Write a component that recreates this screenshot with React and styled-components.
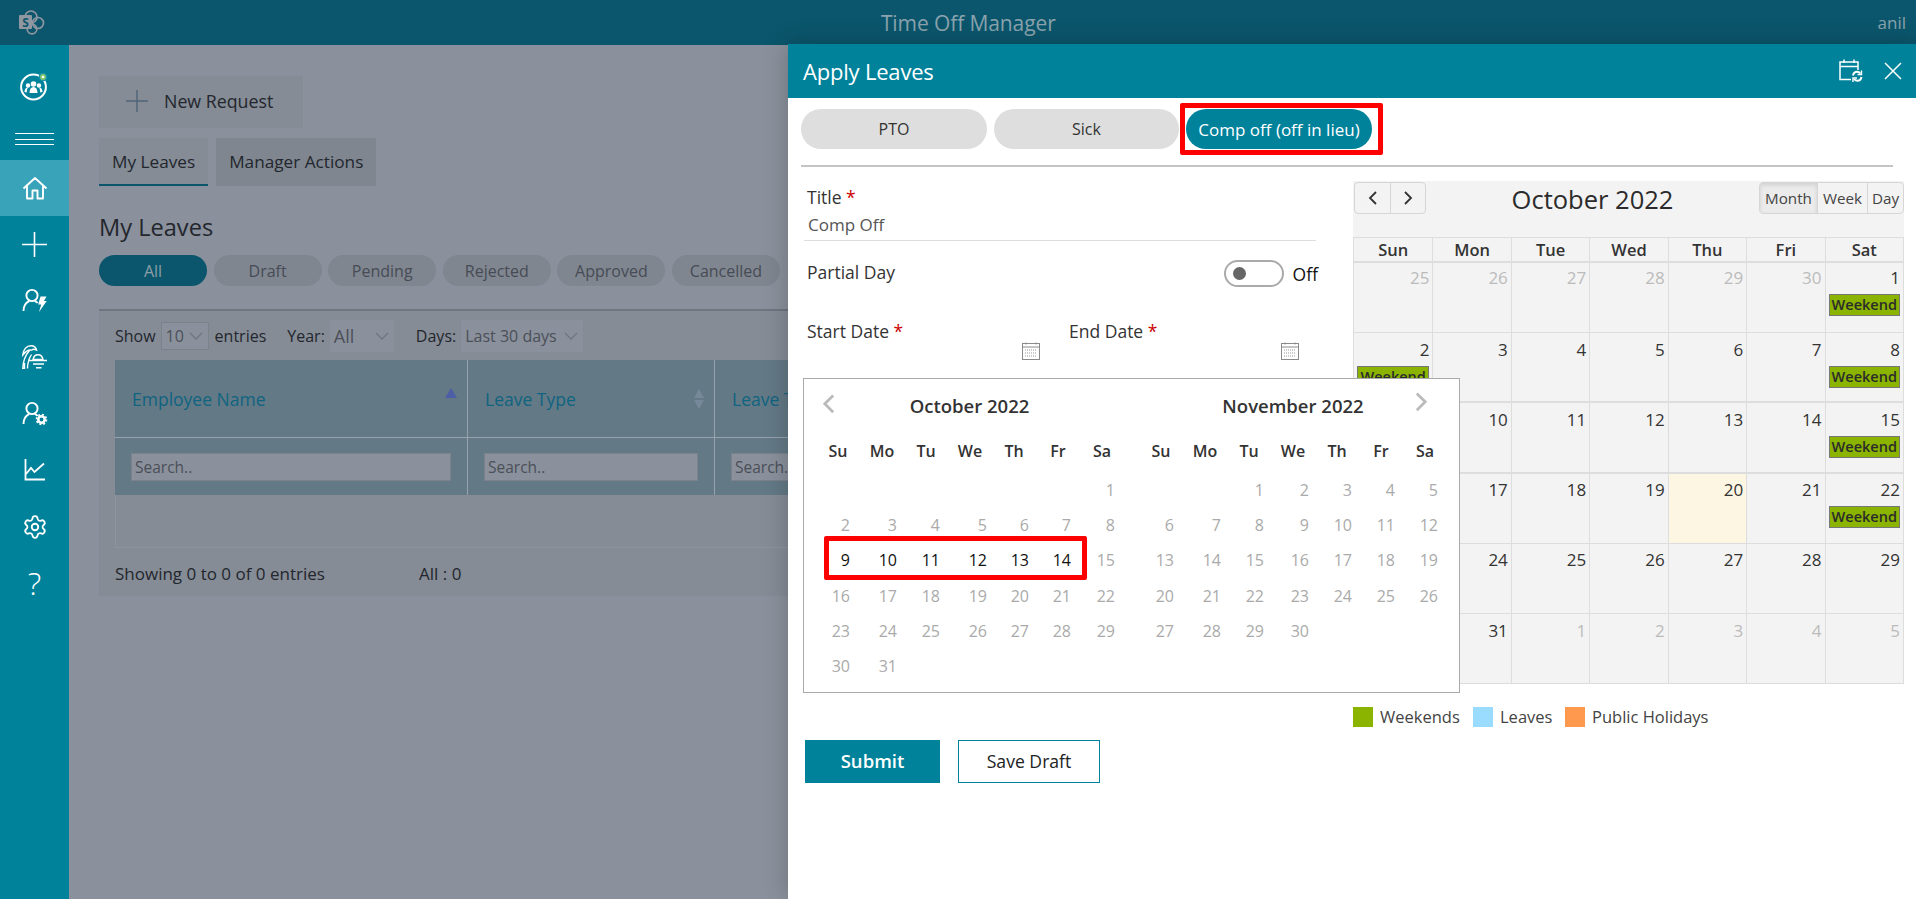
import React from 'react'
import styled, { createGlobalStyle } from 'styled-components'
import { Settings } from 'lucide-react'

const GlobalStyle = createGlobalStyle`
    html, body { margin: 0; padding: 0; }
    body { font-family: "Open Sans", "Noto Sans", sans-serif; color: #333; }
    * { box-sizing: border-box; }
`

const TEAL = '#00829b'

const Page = styled.div`
    width: 1916px;
    height: 899px;
    overflow: hidden;
    display: flex;
    flex-direction: column;
`
const TopBar = styled.header`
    height: 45px;
    flex: none;
    background: #0b566c;
    position: relative;
    display: flex;
    align-items: center;
    justify-content: space-between;
    padding: 0 10px 0 19px;
`
const AppTitle = styled.div`
    font-size: 21px;
    color: #8aa3ae;
    margin-left: 14px;
    letter-spacing: -0.1px;
`
const UserName = styled.div`
    font-size: 17px;
    color: #8aa3ae;
`
const Body = styled.div`
    flex: 1;
    display: flex;
    min-height: 0;
`
const Sidebar = styled.nav`
    width: 69px;
    flex: none;
    background: ${TEAL};
    color: #fff;
    display: flex;
    flex-direction: column;
    padding-top: 27px;
`
const SideLogo = styled.div`
    height: 27px;
    display: flex;
    justify-content: center;
`
const Burger = styled.div`
    height: 12px;
    margin: 34px 15px 15px;
    display: flex;
    flex-direction: column;
    justify-content: space-between;
    span { display: block; height: 1px; background: #fff; }
`
const SideItem = styled.div`
    height: ${p => (p.$active ? '56px' : '56.5px')};
    display: flex;
    align-items: center;
    justify-content: center;
    background: ${p => (p.$active ? '#39a3ba' : 'transparent')};
`
const Question = styled.span`
    font-size: 32px;
    font-weight: 300;
    line-height: 1;
`
const Main = styled.main`
    width: 719px;
    flex: none;
    background: #8a919c;
    padding: 31px 0 0 30px;
    overflow: hidden;
`
const NewRequest = styled.div`
    width: 204px;
    height: 52px;
    background: #858c96;
    display: flex;
    align-items: center;
    padding: 0 0 2px 27px;
    gap: 16px;
    font-size: 17.8px;
    color: #23262d;
`
const Tabs = styled.div`
    display: flex;
    gap: 8px;
    margin-top: 10px;
`
const Tab = styled.div`
    height: 48px;
    padding: 0 13px;
    display: flex;
    align-items: center;
    background: ${p => (p.$active ? '#858c96' : '#7f8690')};
    border-bottom: 2px solid ${p => (p.$active ? '#0b566c' : 'transparent')};
    font-size: 17.2px;
    font-weight: 500;
    color: #23262d;
`
const Heading = styled.h2`
    margin: 24px 0 0;
    font-size: 23.6px;
    line-height: 35px;
    font-weight: 500;
    color: #23262d;
`
const Pills = styled.div`
    display: flex;
    gap: 6.6px;
    margin-top: 10px;
`
const Pill = styled.div`
    width: 108px;
    height: 31px;
    border-radius: 16px;
    display: flex;
    align-items: center;
    justify-content: center;
    font-size: 16px;
    background: ${p => (p.$active ? '#0b566c' : '#7f8690')};
    color: ${p => (p.$active ? '#8b9ea8' : '#474b55')};
`
const Card = styled.section`
    margin-top: 23px;
    height: 287px;
    background: #858c96;
    border-top: 2px solid #6f7680;
    padding: 9px 0 0 16px;
    overflow: hidden;
`
const FilterRow = styled.div`
    height: 32px;
    display: flex;
    align-items: center;
    font-size: 16px;
    color: #23262d;
`
const FilterLabel = styled.span`
    margin: ${p => p.$margin || '0'};
`
const FakeSelect = styled.div`
    width: ${p => p.$width}px;
    height: ${p => p.$height || 32}px;
    margin-left: 5px;
    background: #8a919c;
    border: ${p => (p.$outlined ? '1px solid #7b828c' : 'none')};
    display: flex;
    align-items: center;
    justify-content: space-between;
    padding: 0 5px 0 4px;
    font-size: ${p => p.$size || 16}px;
    color: #4b4f58;
`
const DataTable = styled.div`
    margin-top: 8px;
    display: grid;
    grid-template-columns: 353px 247px 300px;
    grid-template-rows: 78px 57px 53px;
`
const HeadCell = styled.div`
    background: #637986;
    border-right: 1px solid #98a2ac;
    border-bottom: 1px solid #98a2ac;
    padding-left: 17px;
    padding-right: 10px;
    display: flex;
    align-items: center;
    justify-content: space-between;
    font-size: 17.5px;
    color: #0f6480;
    white-space: nowrap;
`
const SortUp = styled.span`
    width: 0;
    height: 0;
    margin-bottom: 12px;
    border-left: 6px solid transparent;
    border-right: 6px solid transparent;
    border-bottom: 10px solid #4e5ea6;
`
const SortBoth = styled.span`
    display: flex;
    flex-direction: column;
    gap: 2px;
    &::before, &::after {
        content: '';
        width: 0;
        height: 0;
        border-left: 5px solid transparent;
        border-right: 5px solid transparent;
    }
    &::before { border-bottom: 9px solid #76899a; }
    &::after { border-top: 9px solid #76899a; }
`
const SearchCell = styled.div`
    background: #637986;
    border-right: 1px solid #98a2ac;
    padding: 15px 16px 13px;
`
const SearchBox = styled.div`
    height: 28px;
    background: #8a919c;
    border: 1px solid #7b828c;
    padding-left: 3px;
    font-size: 15.5px;
    line-height: 26px;
    color: #4b4f58;
    white-space: nowrap;
    overflow: hidden;
`
const EmptyRow = styled.div`
    grid-column: 1 / -1;
    border: 1px solid #8e949e;
    border-top: none;
`
const CardFooter = styled.div`
    display: flex;
    margin-top: 15px;
    font-size: 17px;
    line-height: 22px;
    color: #23262d;
    span:first-child { width: 304px; }
`
const Panel = styled.aside`
    flex: 1;
    margin-top: -1px;
    position: relative;
    background: #fff;
    box-shadow: 0 0 24px rgba(0, 0, 0, 0.22);
    display: flex;
    flex-direction: column;
`
const PanelHead = styled.div`
    height: 54px;
    flex: none;
    background: ${TEAL};
    display: flex;
    align-items: center;
    padding: 0 14px 0 15px;
    color: #fff;
`
const PanelTitle = styled.div`
    font-size: 22px;
    flex: 1;
    letter-spacing: -0.2px;
`
const HeadIcons = styled.div`
    display: flex;
    align-items: center;
    gap: 21px;
`
const LeaveTypes = styled.div`
    display: flex;
    gap: 7px;
    margin: 11px 23px 0 13px;
    padding-bottom: 16px;
    border-bottom: 2px solid #c4c4c4;
`
const LeaveType = styled.div`
    position: relative;
    width: ${p => p.$width}px;
    height: 40px;
    border-radius: 20px;
    display: flex;
    align-items: center;
    justify-content: center;
    font-size: ${p => (p.$active ? 17 : 16)}px;
    background: ${p => (p.$active ? TEAL : '#dedede')};
    color: ${p => (p.$active ? '#fff' : '#333')};
    white-space: nowrap;
    &::after {
        content: ${p => (p.$active ? "''" : 'none')};
        position: absolute;
        inset: -6px -11px -6px -6px;
        border: 5px solid #f00;
        border-radius: 2px;
    }
`
const Columns = styled.div`
    display: flex;
    margin: 14px 0 0 13px;
`
const FormColumn = styled.div`
    width: 552px;
    flex: none;
    position: relative;
    padding-top: 4px;
`
const FieldLabel = styled.div`
    margin-left: ${p => p.$indent ?? 6}px;
    font-size: 17.5px;
    line-height: 24px;
    color: #333;
    b { color: #c00; font-weight: 400; }
`
const TitleValue = styled.div`
    margin: 4px 0 0 3px;
    width: 512px;
    height: 28px;
    padding-left: 4px;
    border-bottom: 1px solid #ddd;
    font-size: 17px;
    line-height: 24px;
    color: #555;
`
const ToggleRow = styled.div`
    display: flex;
    align-items: flex-start;
    justify-content: space-between;
    width: 517px;
    height: 27px;
    margin-top: 19px;
`
const ToggleWrap = styled.div`
    display: flex;
    align-items: center;
    gap: 9px;
    font-size: 17.5px;
    color: #111;
`
const Toggle = styled.div`
    width: 60px;
    height: 27px;
    border: 2px solid #aaa;
    border-radius: 14px;
    padding-left: 7px;
    display: flex;
    align-items: center;
    &::before {
        content: '';
        width: 13px;
        height: 13px;
        border-radius: 50%;
        background: #666;
    }
`
const DateRow = styled.div`
    display: flex;
    margin-top: 32px;
`
const DateField = styled.div`
    width: ${p => p.$width}px;
    margin-left: ${p => p.$margin || 0}px;
    height: 60px;
    display: flex;
    flex-direction: column;
`
const DateIcon = styled.div`
    display: flex;
    justify-content: flex-end;
    padding-right: ${p => p.$pad}px;
    margin-top: -1px;
`
const Popup = styled.div`
    position: absolute;
    top: 197px;
    left: 2px;
    width: 657px;
    height: 315px;
    background: #fff;
    border: 1px solid #aaa;
    display: flex;
    z-index: 2;
`
const ArrowLeft = styled.div`
    position: absolute;
    left: 18px;
    top: 15px;
`
const ArrowRight = styled.div`
    position: absolute;
    right: 31px;
    top: 13px;
`
const Month = styled.div`
    width: ${p => p.$width}px;
    flex: none;
    padding-top: 15px;
`
const MonthName = styled.div`
    text-align: center;
    font-size: 18.5px;
    line-height: 24px;
    font-weight: 600;
    color: #333;
`
const WeekNames = styled.div`
    display: grid;
    grid-template-columns: repeat(7, 44px);
    margin: 21px 0 0 ${p => p.$offset}px;
    font-size: 16px;
    line-height: 24px;
    font-weight: 600;
    color: #333;
    text-align: center;
`
const DayGrid = styled.div`
    position: relative;
    display: grid;
    grid-template-columns: ${p => p.$cols};
    grid-auto-rows: 35.2px;
    margin: 10px 0 0 ${p => p.$offset}px;
    font-size: 16px;
    line-height: 35px;
    text-align: right;
`
const PickerDay = styled.div`
    color: ${p => (p.$selected ? '#111' : '#aaa')};
`
const DateHighlight = styled.div`
    position: absolute;
    left: 14px;
    top: 63px;
    width: 263px;
    height: 44px;
    border: 5px solid #f00;
    border-radius: 2px;
`
const Actions = styled.div`
    display: flex;
    gap: 18px;
    margin: 361px 0 0 4px;
`
const SubmitBtn = styled.div`
    width: 135px;
    height: 43px;
    padding-bottom: 2px;
    background: ${TEAL};
    color: #fff;
    font-size: 18.5px;
    font-weight: 600;
    display: flex;
    align-items: center;
    justify-content: center;
`
const DraftBtn = styled.div`
    width: 142px;
    height: 43px;
    padding-bottom: 2px;
    border: 1px solid ${TEAL};
    color: #222;
    font-size: 17.6px;
    display: flex;
    align-items: center;
    justify-content: center;
`
const CalendarColumn = styled.div`
    width: 551px;
    flex: none;
`
const CalBox = styled.div`
    background: #f3f3f3;
`
const CalToolbar = styled.div`
    height: 56px;
    padding: 1px 0 0 1px;
    display: flex;
    align-items: flex-start;
    justify-content: space-between;
`
const BtnGroup = styled.div`
    display: flex;
    height: 32px;
    border: 1px solid #d6d6d6;
    border-radius: 4px;
    overflow: hidden;
`
const ViewBtn = styled.div`
    width: ${p => p.$width}px;
    display: flex;
    align-items: center;
    justify-content: center;
    font-size: 15.2px;
    color: #444;
    background: ${p => (p.$active ? '#ebebeb' : 'transparent')};
    box-shadow: ${p => (p.$active ? 'inset 0 2px 4px rgba(0,0,0,.12)' : 'none')};
    & + & { border-left: 1px solid #d6d6d6; }
`
const CalTitle = styled.div`
    font-size: 25.5px;
    line-height: 35px;
    font-weight: 500;
    color: #2b2b2b;
`
const CalHead = styled.div`
    display: grid;
    grid-template-columns: repeat(7, 1fr);
    height: 26px;
    border: 1px solid #ddd;
    border-bottom-width: 2px;
`
const CalHeadCell = styled.div`
    text-align: center;
    font-size: 16.5px;
    font-weight: 600;
    line-height: 24px;
    color: #333;
    & + & { border-left: 1px solid #ddd; }
`
const CalWeek = styled.div`
    display: grid;
    grid-template-columns: repeat(7, 1fr);
    height: ${p => p.$height}px;
    border: 1px solid #ddd;
    border-top: none;
    border-bottom-width: ${p => (p.$thick ? 2 : 1)}px;
`
const CalDay = styled.div`
    padding: ${p => p.$top}px 3px 0;
    background: ${p => (p.$today ? '#fdf6e3' : 'transparent')};
    & + & { border-left: 1px solid #ddd; }
`
const DayNumber = styled.div`
    text-align: right;
    font-size: 17px;
    line-height: 24px;
    color: ${p => (p.$muted ? '#bbb' : '#333')};
`
const WeekendTag = styled.div`
    height: 22px;
    margin-top: 4px;
    background: #8ab400;
    border: 1px solid #777;
    text-align: center;
    font-size: 14.5px;
    font-weight: 600;
    line-height: 20px;
    color: #2b2b2b;
`
const Legend = styled.div`
    display: flex;
    align-items: center;
    margin-top: 21px;
    font-size: 16.5px;
    color: #444;
`
const LegendItem = styled.div`
    display: flex;
    align-items: center;
    gap: 7px;
    width: ${p => p.$width}px;
    &::before {
        content: '';
        width: 20px;
        height: 20px;
        background: ${p => p.$color};
    }
`

const HomeIcon = () => (
    <svg width="26" height="24" viewBox="0 0 26 24" fill="none" stroke="#fff" strokeWidth="1.9" strokeLinejoin="round">
        <path d="M1.5 12.5 13 2l11.5 10.5M5 10v12.5h5.5V14.5h5v8H21V10" />
    </svg>
)
const PlusIcon = ({ size = 25, color = '#fff' }) => (
    <svg width={size} height={size} viewBox="0 0 25 25" stroke={color} strokeWidth="1.6">
        <path d="M12.5 0v25M0 12.5h25" />
    </svg>
)
const PersonShape = () => (
    <g fill="none" stroke="#fff" strokeWidth="1.9">
        <circle cx="10" cy="7.5" r="5.6" />
        <path d="M1.5 23c0-5 2.2-8.2 5.6-9.8M13 13.2c1 .4 2 1 2.6 1.8" />
    </g>
)
const PersonBoltIcon = () => (
    <svg width="26" height="25" viewBox="0 0 26 25">
        <PersonShape />
        <path d="M18.5 8.5h6l-2.600 4.600h2.800L17 24l2.200-7.600h-3z" fill="#fff" />
    </svg>
)
const PersonGearIcon = () => (
    <svg width="26" height="25" viewBox="0 0 26 25">
        <PersonShape />
        <circle cx="19.5" cy="18.5" r="3.2" fill="none" stroke="#fff" strokeWidth="2.6" />
        <circle cx="19.5" cy="18.5" r="5" fill="none" stroke="#fff" strokeWidth="1.6" strokeDasharray="2 1.9" />
    </svg>
)
const PalmIcon = () => (
    <svg width="25" height="24" viewBox="0 0 25 24" fill="none" stroke="#fff" strokeWidth="1.400">
        <path d="M.8 10C1.500 4 5 .7 9 .7c3 0 5 1.800 5.500 4.300-2-1-3.800-.8-5 .2C7 4.500 4 6 .8 10z" />
        <path d="M7.500 5.500C3.500 10 1 16 .8 23.500h1.700V18M5.500 23.500c0-5 1.500-10 4-14" />
        <path d="M11 14.500c.6-3 2.600-4.800 5-4.800s4.400 1.800 5 4.800z" />
        <path d="M6.500 15.500H25M11 19h11M14 22.700h5.500" />
    </svg>
)
const ChartIcon = () => (
    <svg width="22" height="22" viewBox="0 0 22 22" fill="none" stroke="#fff" strokeWidth="1.8">
        <path d="M1.500 0v20.500H21M2 15l5-6 3.500 4L20 4.500" />
    </svg>
)
const TeamLogo = () => (
    <svg width="30" height="29" viewBox="0 0 30 29">
        <circle cx="13.500" cy="15" r="12.400" fill="none" stroke="#fff" strokeWidth="2" />
        <circle cx="13.500" cy="12" r="2.800" fill="#fff" />
        <circle cx="8" cy="13.500" r="2.200" fill="#fff" />
        <circle cx="19" cy="13.500" r="2.200" fill="#fff" />
        <path d="M9.500 21c0-4 1.500-6 4-6s4 2 4 6zM4.500 20c0-2.500 1.200-4.500 3.500-4.500-.8 1.200-1.200 3-1.200 5zM22.500 20c0-2.500-1.200-4.500-3.500-4.500.8 1.200 1.200 3 1.200 5z" fill="#fff" />
        <circle cx="23" cy="5" r="3.600" fill="#86c96a" stroke="#1a93a8" strokeWidth="1.400" />
        <circle cx="23" cy="5" r="1.300" fill="#fff" />
    </svg>
)
const SharePointLogo = () => (
    <svg width="26" height="25" viewBox="0 0 26 25">
        <g fill="none" stroke="#8f97a1" strokeWidth="1.700">
            <circle cx="12" cy="7" r="6" />
            <circle cx="19" cy="13" r="5.500" />
            <circle cx="13" cy="19" r="4.800" />
        </g>
        <rect x="0" y="5" width="13" height="14" rx="1" fill="#8f97a1" />
        <text x="6.500" y="16.500" textAnchor="middle" fontFamily="Open Sans" fontWeight="700" fontSize="12" fill="#0b566c">S</text>
    </svg>
)
const MiniCalendar = () => (
    <svg width="18" height="18" viewBox="0 0 18 18" fill="none" stroke="#8a8a8a">
        <rect x=".5" y="1.500" width="17" height="16" />
        <path d="M.5 5h17M4 .5v2M14 .5v2" />
        <path d="M3 8h12M3 11h12M3 14h12" strokeDasharray="1 1" stroke="#999" />
    </svg>
)
const CalendarSync = () => (
    <svg width="24" height="25" viewBox="0 0 24 25" fill="none" stroke="#fff" strokeWidth="1.500">
        <path d="M12 20.500H1V3h18v8M1 7.500h18M5 .5V4M15 .5V4" />
        <path d="M14 16.500c.5-2.500 2.200-3.800 4-3.800 1.400 0 2.500.6 3.300 1.800M22.500 18c-.5 2.500-2.200 3.800-4 3.800-1.400 0-2.500-.6-3.300-1.800" strokeWidth="2" />
        <path d="M22.500 11.500v4h-4M14 23v-4h4" strokeWidth="1.400" />
    </svg>
)
const CloseIcon = () => (
    <svg width="18" height="18" viewBox="0 0 18 18" stroke="#fff" strokeWidth="1.500">
        <path d="M1 1l16 16M17 1 1 17" />
    </svg>
)
const Chevron = ({ dir, size = 14, color = '#444', weight = 2 }) => (
    <svg width={size} height={size * 1.4} viewBox="0 0 10 14" fill="none" stroke={color} strokeWidth={weight}>
        <path d={dir === 'left' ? 'M8 1 2 7l6 6' : 'M2 1l6 6-6 6'} />
    </svg>
)
const SelectArrow = () => (
    <svg width="14" height="8" viewBox="0 0 14 8" fill="none" stroke="#6f7680" strokeWidth="1.300">
        <path d="M1 1l6 6 6-6" />
    </svg>
)

const oct = [
    [null, null, null, null, null, null, 1],
    [2, 3, 4, 5, 6, 7, 8],
    [9, 10, 11, 12, 13, 14, 15],
    [16, 17, 18, 19, 20, 21, 22],
    [23, 24, 25, 26, 27, 28, 29],
    [30, 31],
]
const nov = [
    [null, null, 1, 2, 3, 4, 5],
    [6, 7, 8, 9, 10, 11, 12],
    [13, 14, 15, 16, 17, 18, 19],
    [20, 21, 22, 23, 24, 25, 26],
    [27, 28, 29, 30],
]
const weekNames = ['Su', 'Mo', 'Tu', 'We', 'Th', 'Fr', 'Sa']

const calWeeks = [
    { height: 70, top: 3, days: [25, 26, 27, 28, 29, 30, 1], muted: [0, 1, 2, 3, 4, 5], sat: true },
    { height: 70, top: 5, thick: true, days: [2, 3, 4, 5, 6, 7, 8], sun: true, sat: true },
    { height: 71, top: 5, thick: true, days: [9, 10, 11, 12, 13, 14, 15], sat: true },
    { height: 70, top: 4, days: [16, 17, 18, 19, 20, 21, 22], today: 4, sat: true },
    { height: 70, top: 4, days: [23, 24, 25, 26, 27, 28, 29] },
    { height: 70, top: 5, days: [30, 31, 1, 2, 3, 4, 5], muted: [2, 3, 4, 5, 6] },
]

function PickerMonth({ name, weeks, width, weekOffset, dayOffset, cols, selected, children }) {
    return (
        <Month $width={width}>
            <MonthName>{name}</MonthName>
            <WeekNames $offset={weekOffset}>
                {weekNames.map(n => <div key={n}>{n}</div>)}
            </WeekNames>
            <DayGrid $offset={dayOffset} $cols={cols}>
                {weeks.flatMap((week, i) => week.map((d, j) => (
                    <PickerDay key={`${i}-${j}`} $selected={selected && d >= 9 && d <= 14}>{d}</PickerDay>
                )))}
                {children}
            </DayGrid>
        </Month>
    )
}

function App() {
    return (
        <Page>
            <GlobalStyle />
            <TopBar>
                <SharePointLogo />
                <AppTitle>Time Off Manager</AppTitle>
                <UserName>anil</UserName>
            </TopBar>
            <Body>
                <Sidebar>
                    <SideLogo><TeamLogo /></SideLogo>
                    <Burger><span /><span /><span /></Burger>
                    <SideItem $active><HomeIcon /></SideItem>
                    <SideItem><PlusIcon /></SideItem>
                    <SideItem><PersonBoltIcon /></SideItem>
                    <SideItem><PalmIcon /></SideItem>
                    <SideItem><PersonGearIcon /></SideItem>
                    <SideItem><ChartIcon /></SideItem>
                    <SideItem><Settings size={26} strokeWidth={1.7} color="#fff" /></SideItem>
                    <SideItem><Question>?</Question></SideItem>
                </Sidebar>
                <Main>
                    <NewRequest><PlusIcon size={22} color="#4f6478" />New Request</NewRequest>
                    <Tabs>
                        <Tab $active>My Leaves</Tab>
                        <Tab>Manager Actions</Tab>
                    </Tabs>
                    <Heading>My Leaves</Heading>
                    <Pills>
                        <Pill $active>All</Pill>
                        <Pill>Draft</Pill>
                        <Pill>Pending</Pill>
                        <Pill>Rejected</Pill>
                        <Pill>Approved</Pill>
                        <Pill>Cancelled</Pill>
                    </Pills>
                    <Card>
                        <FilterRow>
                            <FilterLabel>Show</FilterLabel>
                            <FakeSelect $width={48} $height={28} $outlined>10<SelectArrow /></FakeSelect>
                            <FilterLabel $margin="0 21px 0 6px">entries</FilterLabel>
                            <FilterLabel>Year:</FilterLabel>
                            <FakeSelect $width={64} $size={18}>All<SelectArrow /></FakeSelect>
                            <FilterLabel $margin="0 0 0 22px">Days:</FilterLabel>
                            <FakeSelect $width={122}>Last 30 days<SelectArrow /></FakeSelect>
                        </FilterRow>
                        <DataTable>
                            <HeadCell>Employee Name<SortUp /></HeadCell>
                            <HeadCell>Leave Type<SortBoth /></HeadCell>
                            <HeadCell>Leave Type</HeadCell>
                            <SearchCell><SearchBox>Search..</SearchBox></SearchCell>
                            <SearchCell><SearchBox>Search..</SearchBox></SearchCell>
                            <SearchCell><SearchBox>Search..</SearchBox></SearchCell>
                            <EmptyRow />
                        </DataTable>
                        <CardFooter>
                            <span>Showing 0 to 0 of 0 entries</span>
                            <span>All : 0</span>
                        </CardFooter>
                    </Card>
                </Main>
                <Panel>
                    <PanelHead>
                        <PanelTitle>Apply Leaves</PanelTitle>
                        <HeadIcons><CalendarSync /><CloseIcon /></HeadIcons>
                    </PanelHead>
                    <LeaveTypes>
                        <LeaveType $width={186}>PTO</LeaveType>
                        <LeaveType $width={185}>Sick</LeaveType>
                        <LeaveType $width={186} $active>Comp off (off in lieu)</LeaveType>
                    </LeaveTypes>
                    <Columns>
                        <FormColumn>
                            <FieldLabel>Title <b>*</b></FieldLabel>
                            <TitleValue>Comp Off</TitleValue>
                            <ToggleRow>
                                <FieldLabel>Partial Day</FieldLabel>
                                <ToggleWrap><Toggle />Off</ToggleWrap>
                            </ToggleRow>
                            <DateRow>
                                <DateField $width={240}>
                                    <FieldLabel>Start Date <b>*</b></FieldLabel>
                                    <DateIcon $pad={1}><MiniCalendar /></DateIcon>
                                </DateField>
                                <DateField $width={247} $margin={22}>
                                    <FieldLabel $indent={6}>End Date <b>*</b></FieldLabel>
                                    <DateIcon $pad={11}><MiniCalendar /></DateIcon>
                                </DateField>
                            </DateRow>
                            <Popup>
                                <ArrowLeft><Chevron dir="left" color="#bbb" /></ArrowLeft>
                                <ArrowRight><Chevron dir="right" color="#bbb" /></ArrowRight>
                                <PickerMonth
                                    name="October 2022"
                                    weeks={oct}
                                    width={331}
                                    weekOffset={12}
                                    dayOffset={6}
                                    cols="40px 47px 43px 47px 42px 42px 44px"
                                    selected
                                >
                                    <DateHighlight />
                                </PickerMonth>
                                <PickerMonth
                                    name="November 2022"
                                    weeks={nov}
                                    width={316}
                                    weekOffset={4}
                                    dayOffset={-1}
                                    cols="40px 47px 43px 45px 43px 43px 43px"
                                />
                            </Popup>
                            <Actions>
                                <SubmitBtn>Submit</SubmitBtn>
                                <DraftBtn>Save Draft</DraftBtn>
                            </Actions>
                        </FormColumn>
                        <CalendarColumn>
                            <CalBox>
                                <CalToolbar>
                                    <BtnGroup>
                                        <ViewBtn $width={35}><Chevron dir="left" size={10} weight={1.800} color="#333" /></ViewBtn>
                                        <ViewBtn $width={35}><Chevron dir="right" size={10} weight={1.800} color="#333" /></ViewBtn>
                                    </BtnGroup>
                                    <CalTitle>October 2022</CalTitle>
                                    <BtnGroup>
                                        <ViewBtn $width={57} $active>Month</ViewBtn>
                                        <ViewBtn $width={50}>Week</ViewBtn>
                                        <ViewBtn $width={36}>Day</ViewBtn>
                                    </BtnGroup>
                                </CalToolbar>
                                <CalHead>
                                    {['Sun', 'Mon', 'Tue', 'Wed', 'Thu', 'Fri', 'Sat'].map(d => <CalHeadCell key={d}>{d}</CalHeadCell>)}
                                </CalHead>
                                {calWeeks.map((week, i) => (
                                    <CalWeek key={i} $height={week.height} $thick={week.thick}>
                                        {week.days.map((d, j) => (
                                            <CalDay key={j} $top={week.top} $today={week.today === j}>
                                                <DayNumber $muted={week.muted && week.muted.includes(j)}>{d}</DayNumber>
                                                {((week.sun && j === 0) || (week.sat && j === 6)) && <WeekendTag>Weekend</WeekendTag>}
                                            </CalDay>
                                        ))}
                                    </CalWeek>
                                ))}
                            </CalBox>
                            <Legend>
                                <LegendItem $color="#8ab400" $width={120}>Weekends</LegendItem>
                                <LegendItem $color="#99dcff" $width={92}>Leaves</LegendItem>
                                <LegendItem $color="#ff994d" $width={170}>Public Holidays</LegendItem>
                            </Legend>
                        </CalendarColumn>
                    </Columns>
                </Panel>
            </Body>
        </Page>
    )
}

export default App
